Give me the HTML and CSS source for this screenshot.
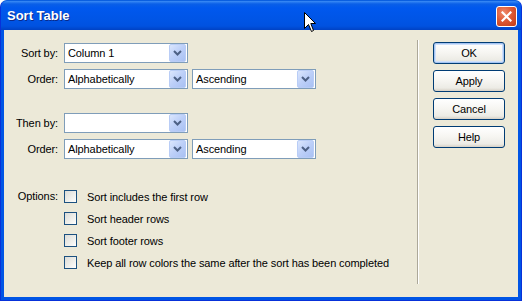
FILE: index.html
```html
<!DOCTYPE html>
<html lang="en">
<head>
	<meta charset="utf-8">
	<title>Sort Table</title>
	<link rel="stylesheet" href="styles.css">
</head>
<body>
   <div class="window">
   	   <div class="titlebar">
   	   	   <span class="title">Sort Table</span>
   	   	   <span class="close">
   	   	   	   <svg width="11" height="11" viewBox="0 0 11 11"><path d="M1.5 1.5 L9.5 9.5 M9.5 1.5 L1.5 9.5" stroke="#fff" stroke-width="2.2" stroke-linecap="square"/></svg>
   	   	   </span>
   	   </div>

   	   <div class="content">
   	   	   <div class="form">
   	   	   	   <div class="row first">
   	   	   	   	   <label>Sort by:</label>
   	   	   	   	   <div class="combo"><span class="value">Column 1</span><span class="arrow"></span></div>
   	   	   	   </div>
   	   	   	   <div class="row">
   	   	   	   	   <label>Order:</label>
   	   	   	   	   <div class="combo"><span class="value">Alphabetically</span><span class="arrow"></span></div>
   	   	   	   	   <div class="combo"><span class="value">Ascending</span><span class="arrow"></span></div>
   	   	   	   </div>
   	   	   	   <div class="row group">
   	   	   	   	   <label>Then by:</label>
   	   	   	   	   <div class="combo"><span class="value"></span><span class="arrow"></span></div>
   	   	   	   </div>
   	   	   	   <div class="row">
   	   	   	   	   <label>Order:</label>
   	   	   	   	   <div class="combo"><span class="value">Alphabetically</span><span class="arrow"></span></div>
   	   	   	   	   <div class="combo"><span class="value">Ascending</span><span class="arrow"></span></div>
   	   	   	   </div>

   	   	   	   <div class="options">
   	   	   	   	   <label>Options:</label>
   	   	   	   	   <div class="checks">
   	   	   	   	   	   <div class="check"><span class="box"></span>Sort includes the first row</div>
   	   	   	   	   	   <div class="check"><span class="box"></span>Sort header rows</div>
   	   	   	   	   	   <div class="check"><span class="box"></span>Sort footer rows</div>
   	   	   	   	   	   <div class="check"><span class="box"></span>Keep all row colors the same after the sort has been completed</div>
   	   	   	   	   </div>
   	   	   	   </div>
   	   	   </div>

   	   	   <div class="separator"></div>

   	   	   <div class="buttons">
   	   	   	   <div class="button default">OK</div>
   	   	   	   <div class="button">Apply</div>
   	   	   	   <div class="button">Cancel</div>
   	   	   	   <div class="button">Help</div>
   	   	   </div>
   	   </div>

   	   <svg class="cursor" width="14" height="22" viewBox="0 0 14 22">
   	   	   <path d="M0.5 0.5 L0.5 16.5 L4.5 12.5 L7.5 19.5 L9.5 18.5 L6.8 11.5 L11.5 11.5 Z" fill="#fff" stroke="#000" stroke-width="1" stroke-linejoin="miter"/>
   	   </svg>
   </div>
</body>
</html>
```

FILE: styles.css
```css
body {
	margin: 0;
	padding: 0;
	background-color: #fff;
	font-family: 'Liberation Sans', Arial, sans-serif;
	font-size: 11px;
	letter-spacing: -0.1px;
	color: #000;
}

.window {
	position: relative;
	width: 522px;
	height: 301px;
	box-sizing: border-box;
	display: flex;
	flex-direction: column;
	background-color: #0055e5;
	border-radius: 7px 7px 0 0;
	border: 1px solid #0831d9;
	border-top-color: #0a5fe0;
	overflow: hidden;
}

.titlebar {
	height: 29px;
	flex-shrink: 0;
	display: flex;
	align-items: center;
	justify-content: space-between;
	padding: 0 4px 0 6px;
	background: linear-gradient(to bottom, #3b8cf5 0, #0a5fe8 3px, #0058ee 7px, #0055e6 18px, #0052e0 25px, #0042c4 29px);
}

.title {
	color: #fff;
	font-weight: bold;
	font-size: 13px;
	letter-spacing: 0;
	text-shadow: 1px 1px 0 #0a2a8a;
	padding-bottom: 1px;
}

.close {
	width: 19px;
	height: 19px;
	margin-top: 1px;
	display: flex;
	align-items: center;
	justify-content: center;
	border: 1px solid #fff;
	border-radius: 3px;
	background: radial-gradient(circle at 35% 30%, #ef8a6c 0, #dd5a36 45%, #c13a14 100%);
}

.content {
	flex: 1;
	display: flex;
	margin: 0 3px 3px 3px;
	background-color: #ece9d8;
}

.form {
	flex: 1;
	padding-left: 4px;
}

.row {
	display: flex;
	align-items: center;
	gap: 4px;
	margin-top: 6px;
}

.row.first {
	margin-top: 13px;
}

.row.group {
	margin-top: 24px;
}

.row label,
.options label {
	width: 50px;
	margin-right: 2px;
	text-align: right;
}

.combo {
	width: 124px;
	height: 20px;
	box-sizing: border-box;
	display: flex;
	align-items: center;
	border: 1px solid #7f9db9;
	background-color: #fff;
}

.combo .value {
	flex: 1;
	padding-left: 3px;
}

.combo .arrow {
	width: 15px;
	height: 16px;
	margin-right: 1px;
	border: 1px solid #b9cdf6;
	border-radius: 2px;
	background:
		url("data:image/svg+xml;utf8,<svg xmlns='http://www.w3.org/2000/svg' width='9' height='6'><path d='M1 1 L4.5 4.5 L8 1' fill='none' stroke='%234d6185' stroke-width='2'/></svg>") center / 9px 6px no-repeat,
		linear-gradient(135deg, #dbe6fd 0, #bccff8 50%, #a9c1f3 100%);
}

.options {
	display: flex;
	margin-top: 31px;
}

.options label {
	line-height: 13px;
	margin-right: 6px;
}

.checks {
	display: flex;
	flex-direction: column;
	gap: 9px;
}

.check {
	display: flex;
	align-items: center;
	height: 13px;
}

.check .box {
	width: 13px;
	height: 13px;
	box-sizing: border-box;
	margin-right: 10px;
	border: 1px solid #1c5180;
	background: linear-gradient(135deg, #dcdcd7 0, #f0f0ec 60%, #fff 100%);
}

.separator {
	width: 1px;
	margin: 10px 0 13px 0;
	background-color: #aca899;
	border-right: 1px solid #fff;
}

.buttons {
	width: 72px;
	display: flex;
	flex-direction: column;
	gap: 6px;
	margin: 12px 13px 0 14px;
}

.button {
	height: 22px;
	box-sizing: border-box;
	display: flex;
	align-items: center;
	justify-content: center;
	border: 1px solid #003c74;
	border-radius: 3px;
	background: linear-gradient(to bottom, #fff 0, #f6f5f1 50%, #ecebe5 85%, #d6d0c5 100%);
}

.button.default {
	box-shadow: inset 0 0 0 1px #a4c4f2, inset 0 0 0 2px #cfe0fa;
}

.cursor {
	position: absolute;
	left: 303px;
	top: 11px;
}
```
